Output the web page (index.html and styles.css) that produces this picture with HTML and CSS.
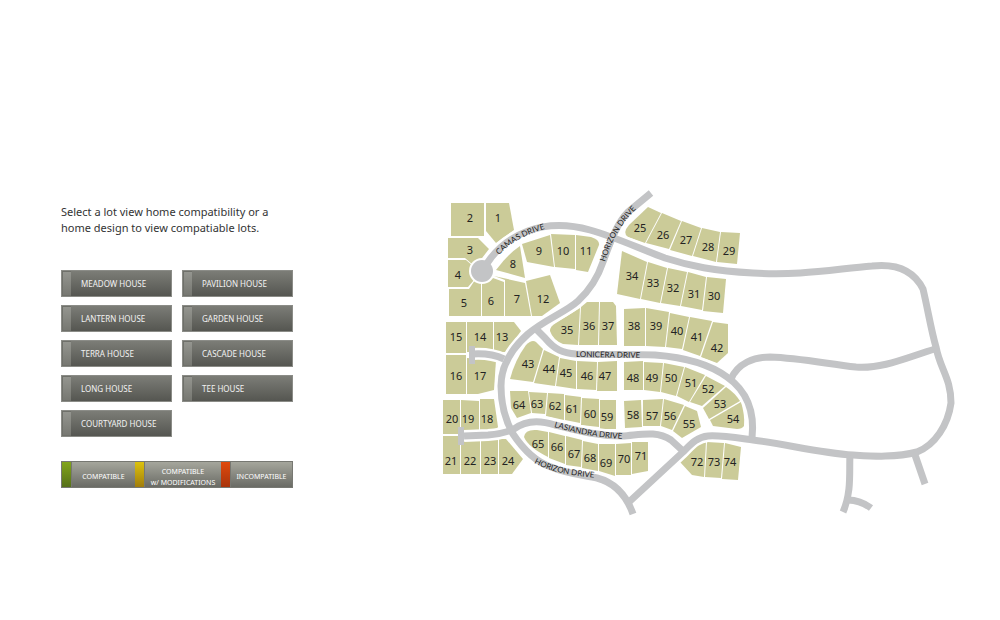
FILE: index.html
```
<!DOCTYPE html>
<html lang="en">
<head>
    <meta charset="UTF-8">
    <meta name="viewport" content="width=device-width, initial-scale=1.0">
    <title>Lot Compatibility</title>
    <link rel="stylesheet" href="styles.css">
</head>
<body>

<main class="page">
    <section class="sidebar">
        <p class="intro">Select a lot view home compatibility or a home design to view compatiable lots.</p>

        <div class="houses">
            <button type="button" class="house">MEADOW HOUSE</button>
            <button type="button" class="house">PAVILION HOUSE</button>
            <button type="button" class="house">LANTERN HOUSE</button>
            <button type="button" class="house">GARDEN HOUSE</button>
            <button type="button" class="house">TERRA HOUSE</button>
            <button type="button" class="house">CASCADE HOUSE</button>
            <button type="button" class="house">LONG HOUSE</button>
            <button type="button" class="house">TEE HOUSE</button>
            <button type="button" class="house">COURTYARD HOUSE</button>
        </div>

        <ul class="legend">
            <li class="key yes"><span>COMPATIBLE</span></li>
            <li class="key maybe"><span>COMPATIBLE<br>w/ MODIFICATIONS</span></li>
            <li class="key no"><span>INCOMPATIBLE</span></li>
        </ul>
    </section>

    <svg class="map" viewBox="435 185 525 335" role="img" aria-label="Lot map">
        <defs>
            <path id="camas-label" d="M499 255 Q516 237 545 229"/>
            <path id="horizon-label" d="M605 262 C611 243 618 227 638 207"/>
            <path id="lonicera-label" d="M576 357 L645 358"/>
            <path id="lasiandra-label" d="M554 427 C576 433 594 438 628 439"/>
            <path id="horizon-south-label" d="M534 463 C551 472 570 476 600 478"/>
            <g id="roads">
                <path d="M482 271 L488 262 C498 247 512 237 528 231 C549 223 572 225 590 230 C615 237 638 248 665 258 C690 266 714 271 753 273 C800 276 835 269 872 266 C899 263 915 273 923 289 C928 310 931 330 936 347 C940 369 951 378 951 403 C948 425 935 445 917 452 C895 458 870 456 853 455 C820 453 786 444 753 440 C738 438 720 435 708 436 C697 437 691 444 683 452 L629 502"/>
                <path d="M651 193 L628 212 C617 223 610 243 603 262 C598 277 591 289 578 301 C566 312 544 320 528 334 C510 350 501 366 501 386 C501 404 504 418 513 434 C523 449 536 462 551 467 C568 474 583 475 597 478 C616 483 627 497 633 514"/>
                <path d="M535 328 L545 338 C555 350 563 353 576 354 C608 355 630 354 655 355 C681 357 708 363 727 377 C747 391 755 411 752 438"/>
                <path d="M731 379 C738 363 754 357 770 357 C800 358 828 364 856 367 C883 369 908 357 935 349"/>
                <path d="M464 436 L488 435 Q503 434 514 429 C527 419 543 421 555 425 C579 431 598 436 622 436 C640 435 656 430 671 440 L683 451"/>
                <path d="M473 354 Q491 353 504 359"/>
                <path d="M850 455 C849 470 852 492 843 512"/>
                <path d="M848 500 Q860 500 871 508"/>
                <path d="M914 452 L925 484"/>
            </g>
        </defs>

        <g class="lots">
            <path d="M486 203 H509 L514 230 496 243 486 231Z"/>
            <path d="M451 203 H484 V236 H451Z"/>
            <path d="M448 238 H478 L489 249 479 262 472 264 465 258 H448Z"/>
            <path d="M448 260 H466 L473 266 474 280 468 287 H448Z"/>
            <path d="M449 289 H469 L475 280 481 282 V316 H449Z"/>
            <path d="M482 282 L493 278 504 282 V316 H482Z"/>
            <path d="M494 276 L525 283 531 316 H505 V280Z"/>
            <path d="M496 270 Q508 254 520 246 L525 278Z"/>
            <path d="M522 244 L550 235 554 267 527 262Z"/>
            <path d="M551 234 L575 235 V269 L555 267Z"/>
            <path d="M576 235 L591 237 Q600 240 599 245 L588 272 576 270Z"/>
            <path d="M526 281 L550 275 560 303 542 316 H532Z"/>
            <path d="M494 322 H514 L521 331 506 352 494 352Z"/>
            <path d="M467 322 H493 V352 H467Z"/>
            <path d="M446 322 H466 V353 H446Z"/>
            <path d="M446 355 H466 V394 H446Z"/>
            <path d="M467 358 L496 360 494 390 478 394 H467Z"/>
            <path d="M480 399 H494 L498 427 496 430 480 431Z"/>
            <path d="M461 400 L479 401 V432 H461Z"/>
            <path d="M443 400 H460 V434 H443Z"/>
            <path d="M443 436 H460 V474 H443Z"/>
            <path d="M461 441 L480 440 V474 H461Z"/>
            <path d="M481 440 H498 V474 H481Z"/>
            <path d="M499 439 H506 L523 459 512 474 H499Z"/>
            <path d="M628 237 Q622 233 629 225 L648 207 661 213 645 243Z"/>
            <path d="M662 213 L681 221 669 249 646 243Z"/>
            <path d="M682 221 L701 228 692 256 670 250Z"/>
            <path d="M702 228 L720 232 716 262 693 256Z"/>
            <path d="M721 232 L740 233 737 264 717 262Z"/>
            <path d="M707 277 L726 279 723 313 703 311Z"/>
            <path d="M688 272 L706 277 702 310 681 306Z"/>
            <path d="M668 268 L687 272 680 306 661 303Z"/>
            <path d="M648 262 L667 268 660 303 641 299Z"/>
            <path d="M622 251 L647 262 640 299 617 294Z"/>
            <path d="M550 331 Q550 326 556 323 L580 308 578 345 563 344 Q553 340 550 331Z"/>
            <path d="M581 307 L587 302 599 302 598 345 579 345Z"/>
            <path d="M600 302 H613 L616 306 617 345 599 345Z"/>
            <path d="M624 309 L645 308 V346 H624Z"/>
            <path d="M646 308 L669 312 665 347 646 346Z"/>
            <path d="M670 313 L689 317 682 349 666 347Z"/>
            <path d="M690 317 L712 321 700 356 683 350Z"/>
            <path d="M713 322 L728 324 V353 L717 363 701 357Z"/>
            <path d="M510 379 Q515 360 526 345 Q532 339 536 342 L543 349 533 382Z"/>
            <path d="M544 350 L559 357 555 386 534 383Z"/>
            <path d="M560 358 L576 361 576 389 556 386Z"/>
            <path d="M577 361 L597 362 596 390 577 389Z"/>
            <path d="M598 362 L617 361 V391 H597Z"/>
            <path d="M624 362 L643 361 V390 H624Z"/>
            <path d="M644 362 L663 363 660 392 644 390Z"/>
            <path d="M664 363 L684 367 676 396 661 392Z"/>
            <path d="M685 367 L705 375 689 402 677 396Z"/>
            <path d="M706 376 L725 386 702 406 690 402Z"/>
            <path d="M726 387 Q735 393 740 401 L709 419 703 408Z"/>
            <path d="M741 402 Q745 415 744 426 Q742 429 737 429 L713 426 710 420Z"/>
            <path d="M685 406 L697 411 701 427 682 438 673 431Z"/>
            <path d="M664 399 L684 405 672 430 661 426Z"/>
            <path d="M643 400 L663 399 660 426 643 426Z"/>
            <path d="M624 401 L641 400 642 427 625 428Z"/>
            <path d="M600 400 H616 V429 H600Z"/>
            <path d="M582 398 L599 399 V427 L581 425Z"/>
            <path d="M565 395 L581 397 580 423 565 420Z"/>
            <path d="M548 393 L564 394 V420 L546 416Z"/>
            <path d="M529 392 L547 393 545 414 532 413Z"/>
            <path d="M510 391 H528 L531 413 517 418 511 408Z"/>
            <path d="M524 437 Q525 429 537 430 L548 432 V457 Q528 447 524 437Z"/>
            <path d="M549 432 L565 436 V464 L549 458Z"/>
            <path d="M566 436 L582 440 581 467 566 465Z"/>
            <path d="M583 441 L598 444 V471 L582 468Z"/>
            <path d="M599 444 H615 V476 L599 471Z"/>
            <path d="M616 444 L631 443 V475 H616Z"/>
            <path d="M632 442 H648 V471 L632 474Z"/>
            <path d="M680 462 Q694 443 706 442 L704 477 692 475Z"/>
            <path d="M707 442 L724 443 721 478 705 477Z"/>
            <path d="M725 443 L741 447 738 480 722 479Z"/>
        </g>

        <!-- white edge first, then the road surface -->
        <use class="road-edge" href="#roads"/>
        <circle class="circle-edge" cx="482" cy="271" r="13"/>
        <use class="road" href="#roads"/>
        <g class="turnaround">
            <circle cx="482" cy="271" r="11"/>
            <rect x="469" y="346" width="6" height="18"/>
            <rect x="458" y="427" width="6" height="18"/>
        </g>

        <g class="numbers">
            <text x="498" y="222">1</text>
            <text x="470" y="222">2</text>
            <text x="470" y="254">3</text>
            <text x="458" y="279">4</text>
            <text x="464" y="307">5</text>
            <text x="491" y="305">6</text>
            <text x="517" y="303">7</text>
            <text x="513" y="268">8</text>
            <text x="539" y="255">9</text>
            <text x="563" y="255">10</text>
            <text x="586" y="255">11</text>
            <text x="543" y="303">12</text>
            <text x="502" y="341">13</text>
            <text x="480" y="341">14</text>
            <text x="456" y="341">15</text>
            <text x="456" y="380">16</text>
            <text x="480" y="380">17</text>
            <text x="487" y="423">18</text>
            <text x="468" y="423">19</text>
            <text x="452" y="423">20</text>
            <text x="451" y="465">21</text>
            <text x="470" y="465">22</text>
            <text x="490" y="465">23</text>
            <text x="508" y="465">24</text>
            <text x="640" y="232">25</text>
            <text x="663" y="239">26</text>
            <text x="686" y="244">27</text>
            <text x="708" y="251">28</text>
            <text x="729" y="255">29</text>
            <text x="714" y="300">30</text>
            <text x="694" y="298">31</text>
            <text x="673" y="292">32</text>
            <text x="653" y="287">33</text>
            <text x="632" y="280">34</text>
            <text x="567" y="334">35</text>
            <text x="589" y="330">36</text>
            <text x="608" y="330">37</text>
            <text x="634" y="330">38</text>
            <text x="656" y="330">39</text>
            <text x="677" y="335">40</text>
            <text x="697" y="341">41</text>
            <text x="717" y="352">42</text>
            <text x="528" y="368">43</text>
            <text x="549" y="373">44</text>
            <text x="566" y="377">45</text>
            <text x="587" y="380">46</text>
            <text x="605" y="380">47</text>
            <text x="633" y="382">48</text>
            <text x="652" y="382">49</text>
            <text x="671" y="382">50</text>
            <text x="691" y="387">51</text>
            <text x="708" y="393">52</text>
            <text x="720" y="408">53</text>
            <text x="733" y="423">54</text>
            <text x="689" y="428">55</text>
            <text x="670" y="420">56</text>
            <text x="652" y="420">57</text>
            <text x="633" y="419">58</text>
            <text x="607" y="421">59</text>
            <text x="590" y="418">60</text>
            <text x="572" y="413">61</text>
            <text x="555" y="410">62</text>
            <text x="537" y="408">63</text>
            <text x="519" y="409">64</text>
            <text x="538" y="448">65</text>
            <text x="557" y="451">66</text>
            <text x="574" y="458">67</text>
            <text x="590" y="462">68</text>
            <text x="606" y="467">69</text>
            <text x="624" y="463">70</text>
            <text x="641" y="460">71</text>
            <text x="697" y="466">72</text>
            <text x="714" y="466">73</text>
            <text x="730" y="466">74</text>
        </g>

        <g class="streets">
            <text><textPath href="#camas-label">CAMAS DRIVE</textPath></text>
            <text><textPath href="#horizon-label">HORIZON DRIVE</textPath></text>
            <text><textPath href="#lonicera-label">LONICERA DRIVE</textPath></text>
            <text><textPath href="#lasiandra-label">LASIANDRA DRIVE</textPath></text>
            <text><textPath href="#horizon-south-label">HORIZON DRIVE</textPath></text>
        </g>
    </svg>
</main>

</body>
</html>
```
FILE: styles.css
```
body {
    margin: 0;
    background-color: #fff;
    font-family: "Noto Sans", sans-serif;
    color: #333;
}
.page {
    display: flex;
    align-items: flex-start;
    gap: 142px;
    padding: 185px 40px 40px 61px;
}
.sidebar {
    flex: 0 0 232px;
    padding-top: 19px;
}
.intro {
    margin: 0 0 34px;
    font-size: 11px;
    line-height: 16px;
}
.houses {
    display: grid;
    grid-template-columns: 1fr 1fr;
    gap: 8px 10px;
}
.house {
    display: flex;
    align-items: center;
    gap: 10px;
    height: 27px;
    padding: 0;
    border: 1px solid #8b8c87;
    background: linear-gradient(#7c7d77, #555651);
    color: #f2f2f2;
    font-family: inherit;
    font-size: 8px;
    line-height: 23px;
    cursor: pointer;
}
.house::before {
    content: "";
    align-self: stretch;
    flex: 0 0 8px;
    border: 1px solid #6f706a;
    border-width: 1px 0 1px 1px;
    background: linear-gradient(#94958f, #777872);
}
.house:hover {
    background: linear-gradient(#8b8c86, #64655f);
}
.legend {
    display: grid;
    grid-template-columns: 73px 86px 1fr;
    margin: 24px 0 0;
    padding: 0;
    border: 1px solid #777872;
    list-style: none;
    color: #fff;
    font-size: 7px;
    line-height: 11px;
    text-align: center;
}
.key {
    display: flex;
    height: 25px;
    background: linear-gradient(#a5a69c, #6a6b65);
}
.key::before {
    content: "";
    flex: 0 0 9px;
    border-right: 1px solid #777872;
}
.key span {
    flex: 1;
    align-self: center;
    padding-top: 4px;
    white-space: nowrap;
}
.yes::before {
    background: linear-gradient(#82a51b, #56701a);
}
.maybe::before {
    background: linear-gradient(#dcc20e, #a17d0c);
}
.no::before {
    background: linear-gradient(#e04a0c, #a8340c);
}
.map {
    flex: 1;
    min-width: 0;
}
.lots {
    fill: #cbcb98;
}
.road,
.road-edge {
    fill: none;
    stroke: #c3c4c6;
    stroke-width: 7px;
    stroke-linejoin: round;
}
.road-edge {
    stroke: #fff;
    stroke-width: 12px;
}
.circle-edge {
    fill: #fff;
}
.turnaround {
    fill: #c3c4c6;
}
.numbers {
    fill: #222;
    font-size: 11px;
    text-anchor: middle;
}
.streets {
    fill: #222;
    font-family: Lato, sans-serif;
    font-size: 8px;
}
```
